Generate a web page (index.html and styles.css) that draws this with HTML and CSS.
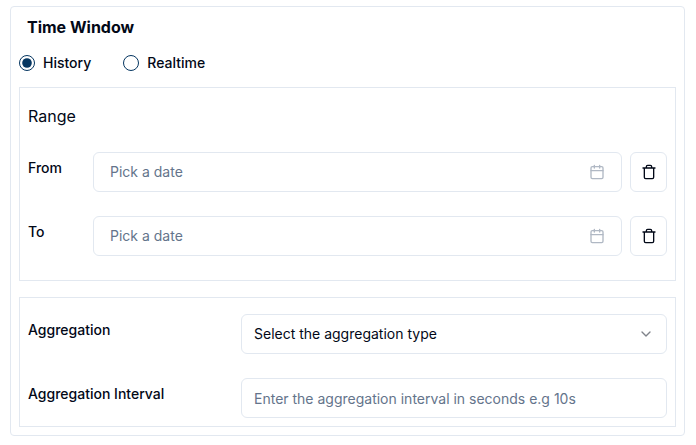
FILE: index.html
```html
<!DOCTYPE html>
<html lang="en">
<head>
<meta charset="utf-8">
<title>Time Window</title>
<link rel="stylesheet" href="styles.css">
</head>
<body>
<form class="card">
  <h2 class="title">Time Window</h2>
  <div class="radios">
    <label class="radio"><svg class="dot" viewBox="0 0 16 16"><circle cx="8" cy="8" r="7.5"/><circle class="fill" cx="8" cy="8" r="4.8"/></svg>History</label>
    <label class="radio"><svg class="dot" viewBox="0 0 16 16"><circle cx="8" cy="8" r="7.5"/></svg>Realtime</label>
  </div>
  <section class="panel range">
    <h3 class="subtitle">Range</h3>
    <div class="row">
      <span class="label">From</span>
      <div class="field date">Pick a date
        <svg class="icon calendar" viewBox="0 0 24 24"><rect x="3" y="4" width="18" height="18" rx="2"/><path d="M16 2v4M8 2v4M3 10h18"/></svg>
      </div>
      <button type="button" class="trash" aria-label="Clear from"><svg class="icon" viewBox="0 0 24 24"><path d="M3 6h18M19 6v14c0 1-1 2-2 2H7c-1 0-2-1-2-2V6M8 6V4c0-1 1-2 2-2h4c1 0 2 1 2 2v2"/></svg></button>
    </div>
    <div class="row">
      <span class="label">To</span>
      <div class="field date">Pick a date
        <svg class="icon calendar" viewBox="0 0 24 24"><rect x="3" y="4" width="18" height="18" rx="2"/><path d="M16 2v4M8 2v4M3 10h18"/></svg>
      </div>
      <button type="button" class="trash" aria-label="Clear to"><svg class="icon" viewBox="0 0 24 24"><path d="M3 6h18M19 6v14c0 1-1 2-2 2H7c-1 0-2-1-2-2V6M8 6V4c0-1 1-2 2-2h4c1 0 2 1 2 2v2"/></svg></button>
    </div>
  </section>
  <section class="panel aggregation">
    <div class="row">
      <span class="label">Aggregation</span>
      <div class="field select">Select the aggregation type
        <svg class="icon chevron" viewBox="0 0 24 24"><path d="m6 9 6 6 6-6"/></svg>
      </div>
    </div>
    <div class="row">
      <span class="label">Aggregation Interval</span>
      <div class="field interval">Enter the aggregation interval in seconds e.g 10s</div>
    </div>
  </section>
</form>
</body>
</html>
```
FILE: styles.css
```css
* { box-sizing: border-box; }
body {
  margin: 0;
  padding: 6px 11px 0 10px;
  background: #fff;
  color: #020817;
  font: 14px/20px Inter, sans-serif;
}
.card {
  height: 430px;
  padding: 8px;
  border: 1px solid #e2e8f0;
  border-radius: 4px;
}
.title {
  margin: 0 0 0 8px;
  font-size: 16px;
  line-height: 24px;
  font-weight: 700;
}
.radios { display: flex; gap: 32px; margin-top: 14px; height: 20px; }
.radio { display: flex; align-items: center; gap: 8px; font-weight: 500; }
.dot { width: 16px; height: 16px; fill: none; stroke: #053661; }
.dot .fill { fill: #053661; stroke: none; }
.panel { border: 1px solid #e2e8f0; padding: 16px 8px 0; }
.range { height: 194px; margin-top: 14px; }
.aggregation { height: 130px; margin-top: 16px; }
.subtitle { margin: 0 0 24px; font-size: 16px; line-height: 24px; font-weight: 400; }
.row { display: flex; height: 40px; margin-bottom: 24px; }
.label { width: 65px; padding-top: 6px; font-weight: 500; }
.aggregation .label { width: 213px; }
.field {
  display: flex;
  flex: 1;
  align-items: center;
  justify-content: space-between;
  border: 1px solid #e2e8f0;
  border-radius: 6px;
  padding: 0 12px;
}
.date { padding: 0 16px; color: #64748b; }
.interval { padding-top: 1px; color: #64748b; }
.trash {
  display: flex;
  align-items: center;
  justify-content: center;
  width: 37px;
  margin-left: 8px;
  padding: 0;
  color: #020817;
  background: #fff;
  border: 1px solid #e2e8f0;
  border-radius: 6px;
}
.icon {
  width: 16px;
  height: 16px;
  fill: none;
  stroke: currentColor;
  stroke-width: 2;
  stroke-linecap: round;
  stroke-linejoin: round;
}
.calendar { opacity: .5; }
.chevron { opacity: .5; }
```
